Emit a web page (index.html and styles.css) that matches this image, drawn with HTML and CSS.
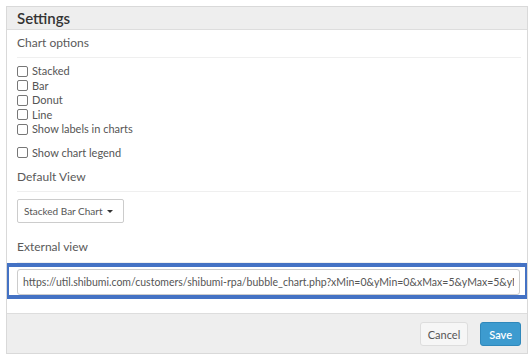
FILE: index.html
```html
<!DOCTYPE html>
<html lang="en">
<head>
    <meta charset="UTF-8">
    <title>Settings</title>
    <link rel="stylesheet" href="styles.css">
</head>
<body>

    <!-- Settings dialog -->
    <div class="modal">
        <div class="modal-header">
            <h3>Settings</h3>
        </div>

        <div class="modal-body">
            <div class="section-title">Chart options</div>
            <div class="checks">
                <label><input type="checkbox"> Stacked</label>
                <label><input type="checkbox"> Bar</label>
                <label><input type="checkbox"> Donut</label>
                <label><input type="checkbox"> Line</label>
                <label><input type="checkbox"> Show labels in charts</label>
            </div>
            <div class="checks legend">
                <label><input type="checkbox"> Show chart legend</label>
            </div>

            <div class="section-title spaced">Default View</div>
            <button class="dropdown">Stacked Bar Chart <span class="caret"></span></button>

            <div class="section-title external">External view</div>
            <div class="url-row">
                <input class="url" type="text" value="https://util.shibumi.com/customers/shibumi-rpa/bubble_chart.php?xMin=0&amp;yMin=0&amp;xMax=5&amp;yMax=5&amp;yMin=0">
                <!-- highlight drawn over the field -->
                <div class="highlight"></div>
            </div>

            <div class="section-title api">API Key</div>
        </div>

        <div class="modal-footer">
            <button class="btn">Cancel</button>
            <button class="btn btn-primary">Save</button>
        </div>
    </div>

</body>
</html>
```

FILE: styles.css
```css
/* Basic reset */
* {
    margin: 0;
    padding: 0;
    box-sizing: border-box;
}

body {
    font-family: Lato, "Open Sans", sans-serif;
    background-color: #fff;
    color: #444;
    padding: 6px 0 0 6px;
}

.modal {
    width: 522px;
    border: 1px solid #d9d9d9;
    background-color: #fff;
}

.modal-header {
    height: 23px;
    background-color: #eeeeee;
    border-bottom: 1px solid #dddddd;
    padding-left: 10px;
}

.modal-header h3 {
    font-size: 15px;
    font-weight: 600;
    line-height: 22px;
    color: #333;
}

.modal-body {
    height: 283px;
    overflow: hidden;
    padding: 5px 6px 0 10px;
}

.section-title {
    font-size: 12px;
    line-height: 16px;
    color: #5a5a5a;
    padding-bottom: 6px;
    border-bottom: 1px solid #efefef;
}

.section-title.spaced {
    margin-top: 9px;
}

.section-title.external {
    margin-top: 16px;
    padding-bottom: 7px;
}

.section-title.api {
    margin-top: 14px;
}

.checks {
    margin-top: 6px;
}

.checks.legend {
    margin-top: 9px;
}

.checks label {
    display: flex;
    align-items: center;
    gap: 4px;
    font-size: 11px;
    line-height: 14.5px;
    color: #555;
}

.checks input {
    appearance: none;
    width: 11px;
    height: 11px;
    border: 1px solid #777;
    border-radius: 2px;
    background-color: #fff;
}

.dropdown {
    display: flex;
    align-items: center;
    gap: 4px;
    margin-top: 7px;
    height: 24px;
    width: 107px;
    padding: 0 6px;
    background-color: #fff;
    border: 1px solid #cccccc;
    border-radius: 2px;
    font-family: inherit;
    font-size: 10px;
    color: #555;
}

.caret {
    width: 0;
    height: 0;
    border-left: 3px solid transparent;
    border-right: 3px solid transparent;
    border-top: 3px solid #333;
}

.url-row {
    position: relative;
    margin-top: 6px;
}

.url {
    display: block;
    width: 503px;
    height: 26px;
    padding: 0 5px;
    border: 1px solid #cccccc;
    border-radius: 3px;
    font-family: inherit;
    font-size: 10.5px;
    color: #555;
    outline: none;
}

.highlight {
    position: absolute;
    left: -12px;
    top: -6px;
    width: 524px;
    height: 36px;
    border: 4px solid #4472c4;
    pointer-events: none;
}

.modal-footer {
    display: flex;
    justify-content: flex-end;
    gap: 12px;
    height: 40px;
    padding: 8px 6px 0 0;
    background-color: #eeeeee;
    border-top: 1px solid #dddddd;
}

.btn {
    height: 24px;
    padding: 0 7px;
    border: 1px solid #dddddd;
    border-radius: 3px;
    background-color: #f6f6f6;
    font-family: inherit;
    font-size: 11px;
    color: #555;
}

.btn-primary {
    padding: 0 8px;
    background-color: #3d9bcf;
    border-color: #2f88bb;
    color: #fff;
    font-weight: 600;
}
```
